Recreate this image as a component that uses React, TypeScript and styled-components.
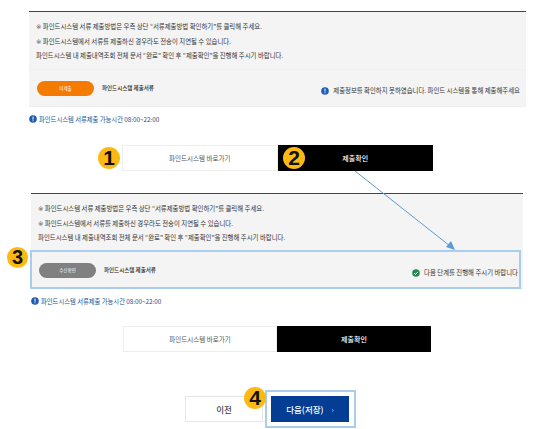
import styled, { createGlobalStyle } from "styled-components";

const Global = createGlobalStyle`
  html, body { margin: 0; padding: 0; background: #fff; }
  body { width: 533px; height: 429px; overflow: hidden; font-family: "Noto Sans CJK KR", "Noto Sans", sans-serif; }
`;

const Page = styled.div`
  position: relative;
  width: 533px;
  height: 429px;
  overflow: hidden;
  padding-top: 11px;
  box-sizing: border-box;
`;

const Section = styled.section<{ $left: number; $width: number; $top?: number }>`
  margin: ${({ $top }) => $top ?? 0}px 0 0 ${({ $left }) => $left}px;
  width: ${({ $width }) => $width}px;
`;

const Notice = styled.div`
  border-top: 1px solid #444;
  background: #f4f4f4;
`;

const Notes = styled.div<{ $height: number }>`
  height: ${({ $height }) => $height}px;
  padding: 8px 0 0 7px;
  box-sizing: border-box;
`;

const Note = styled.p`
  margin: 0;
  height: 14.5px;
  line-height: 14.5px;
  font-size: 6.4px;
  color: #333;
  white-space: nowrap;
`;

const Mark = styled.span`
  font-family: "DejaVu Sans", sans-serif;
  color: #555;
`;

const Status = styled.div<{ $top: number; $right: number; $height: number }>`
  display: flex;
  align-items: flex-start;
  height: ${({ $height }) => $height}px;
  box-sizing: border-box;
  padding: ${({ $top, $right }) => `${$top}px ${$right}px 0 8px`};
  border-top: 1px solid #f0f0f0;
  border-bottom: 1px solid #eee;
`;

const Pill = styled.span<{ $color: string }>`
  width: 57px;
  height: 15px;
  line-height: 15px;
  border-radius: 8px;
  background: ${({ $color }) => $color};
  color: #fff;
  font-size: 4.5px;
  text-align: center;
  flex-shrink: 0;
`;

const DocLabel = styled.span`
  margin-left: 8px;
  font-size: 5.5px;
  line-height: 15px;
  color: #222;
  font-weight: 500;
  white-space: nowrap;
`;

const StatusMessage = styled.span`
  margin-left: auto;
  margin-top: 5px;
  display: flex;
  align-items: center;
  gap: 4px;
  font-size: 6.4px;
  line-height: 10px;
  color: #333;
  white-space: nowrap;
`;

const Hours = styled.div`
  display: flex;
  align-items: center;
  gap: 2px;
  height: 14px;
  margin-top: 5px;
  font-size: 6.3px;
  color: #234f8e;
  white-space: nowrap;
`;

const ButtonRow = styled.div<{ $top: number; $left: number; $width: number }>`
  display: flex;
  width: ${({ $width }) => $width}px;
  margin: ${({ $top }) => $top}px 0 0 ${({ $left }) => $left}px;
`;

const LinkBtn = styled.div<{ $dark?: boolean }>`
  flex: 1;
  height: 26px;
  line-height: 24px;
  box-sizing: border-box;
  text-align: center;
  font-size: ${({ $dark }) => ($dark ? 7 : 6.5)}px;
  border: 1px solid ${({ $dark }) => ($dark ? "#000" : "#eee")};
  background: ${({ $dark }) => ($dark ? "#000" : "#fff")};
  color: ${({ $dark }) => ($dark ? "#fff" : "#555")};
  font-weight: ${({ $dark }) => ($dark ? 500 : 400)};
`;

const Footer = styled.div`
  display: flex;
  gap: 8px;
  margin: 44px 0 0 185px;
`;

const PrevBtn = styled.div`
  width: 78px;
  height: 26px;
  line-height: 24px;
  box-sizing: border-box;
  border: 1px solid #e6e6e6;
  text-align: center;
  font-size: 8.5px;
  font-weight: 500;
  color: #444;
`;

const NextBtn = styled.div`
  display: flex;
  align-items: center;
  justify-content: center;
  gap: 8px;
  width: 78px;
  height: 26px;
  background: #033d94;
  color: #fff;
  font-size: 8.5px;
  font-weight: 500;
`;

const Chevron = styled.span`
  font-size: 7px;
  color: #c9d6ea;
`;

const Badge = styled.span<{ $x: number; $y: number; $size: number }>`
  position: absolute;
  left: ${({ $x }) => $x}px;
  top: ${({ $y }) => $y}px;
  width: ${({ $size }) => $size}px;
  height: ${({ $size }) => $size}px;
  border-radius: 50%;
  background: #fdb913;
  color: #111;
  font-family: "Liberation Sans", sans-serif;
  font-weight: 700;
  font-size: ${({ $size }) => Math.round($size * 0.95)}px;
  line-height: ${({ $size }) => $size}px;
  text-align: center;
`;

// annotation rectangles drawn over the capture
const Highlight = styled.div<{ $x: number; $y: number; $w: number; $h: number }>`
  position: absolute;
  left: ${({ $x }) => $x}px;
  top: ${({ $y }) => $y}px;
  width: ${({ $w }) => $w}px;
  height: ${({ $h }) => $h}px;
  box-sizing: border-box;
  border: 2px solid #a9cdec;
`;

const Overlay = styled.svg`
  position: absolute;
  left: 0;
  top: 0;
  pointer-events: none;
`;

const Info = () => (
  <svg width="8" height="8" viewBox="0 0 8 8">
    <circle cx="4" cy="4" r="3.8" fill="#1f5bb0" />
    <rect x="3.5" y="1.6" width="1" height="3" fill="#fff" />
    <rect x="3.5" y="5.3" width="1" height="1" fill="#fff" />
  </svg>
);

const Check = () => (
  <svg width="8" height="8" viewBox="0 0 8 8">
    <circle cx="4" cy="4" r="3.8" fill="#1f8a4c" />
    <path d="M2.2 4.1 3.6 5.4 5.9 2.8" fill="none" stroke="#fff" strokeWidth="1" />
  </svg>
);

const NoteList = () => (
  <>
    <Note><Mark>※</Mark> 파인드시스템 서류 제출방법은 우측 상단 “서류제출방법 확인하기”를 클릭해 주세요.</Note>
    <Note><Mark>※</Mark> 파인드시스템에서 서류를 제출하신 경우라도 전송이 지연될 수 있습니다.</Note>
    <Note>파인드시스템 내 제출내역조회 전체 문서 “완료” 확인 후 “제출확인”을 진행해 주시기 바랍니다.</Note>
  </>
);

export default function App() {
  return (
    <Page>
      <Global />
      <Section $left={29} $width={497}>
        <Notice>
          <Notes $height={57}>
            <NoteList />
          </Notes>
          <Status $top={11} $right={6} $height={38}>
            <Pill $color="#f47b00">미제출</Pill>
            <DocLabel>파인드시스템 제출서류</DocLabel>
            <StatusMessage>
              <Info />
              제출정보를 확인하지 못하였습니다. 파인드 시스템을 통해 제출해주세요
            </StatusMessage>
          </Status>
        </Notice>
        <Hours><Info />파인드시스템 서류제출 가능시간 08:00~22:00</Hours>
      </Section>
      <ButtonRow $top={19} $left={122} $width={311}>
        <LinkBtn>파인드시스템 바로가기</LinkBtn>
        <LinkBtn $dark>제출확인</LinkBtn>
      </ButtonRow>
      <Section $left={31} $width={492} $top={22}>
        <Notice>
          <Notes $height={56}>
            <NoteList />
          </Notes>
          <Status $top={12} $right={5} $height={39}>
            <Pill $color="#808080">수신확인</Pill>
            <DocLabel>파인드시스템 제출서류</DocLabel>
            <StatusMessage>
              <Check />
              다음 단계를 진행해 주시기 바랍니다
            </StatusMessage>
          </Status>
        </Notice>
        <Hours><Info />파인드시스템 서류제출 가능시간 08:00~22:00</Hours>
      </Section>
      <ButtonRow $top={18} $left={123} $width={308}>
        <LinkBtn>파인드시스템 바로가기</LinkBtn>
        <LinkBtn $dark>제출확인</LinkBtn>
      </ButtonRow>
      <Footer>
        <PrevBtn>이전</PrevBtn>
        <NextBtn>다음(저장)<Chevron>›</Chevron></NextBtn>
      </Footer>
      <Highlight $x={30} $y={250} $w={491} $h={39} />
      <Highlight $x={265} $y={390} $w={91} $h={38} />
      <Badge $x={98} $y={147} $size={22}>1</Badge>
      <Badge $x={283} $y={147} $size={22}>2</Badge>
      <Badge $x={7} $y={247} $size={21}>3</Badge>
      <Badge $x={244} $y={387} $size={22}>4</Badge>
      <Overlay width="533" height="429" viewBox="0 0 533 429">
        <path d="M355 171 L450 246" stroke="#5b9bd5" strokeWidth="1" fill="none" />
        <path d="M455 250 L446 247 L451 241 Z" fill="#5b9bd5" />
      </Overlay>
    </Page>
  );
}
